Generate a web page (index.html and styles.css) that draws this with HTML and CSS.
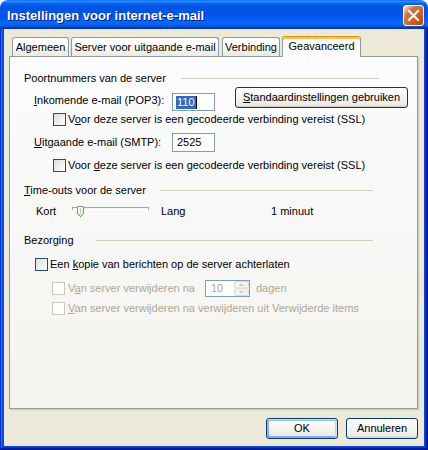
FILE: index.html
```html
<!DOCTYPE html>
<html>
<head>
<meta charset="utf-8">
<link rel="stylesheet" href="styles.css">
</head>
<body>
<div class="window">
  <div class="titlebar">
    <span class="title">Instellingen voor internet-e-mail</span>
    <div class="close">
      <svg width="19" height="19" viewBox="0 0 19 19"><path d="M5 5 L14 14 M14 5 L5 14" stroke="#fff" stroke-width="2.2" stroke-linecap="square"/></svg>
    </div>
  </div>
  <div class="frame">
    <div class="client">
      <div class="tabs">
        <div class="tab t1">Algemeen</div>
        <div class="tab t2">Server voor uitgaande e-mail</div>
        <div class="tab t3">Verbinding</div>
        <div class="tab active t4">Geavanceerd</div>
      </div>
      <div class="panel">
        <div class="group g1"><span class="glabel w1">Poortnummers van de server</span><span class="rule"></span></div>

        <div class="row r-in">
          <span class="flabel top7"><u>I</u>nkomende e-mail (POP3):</span>
          <div class="input in-sel"><span class="sel">110</span><span class="caret"></span></div>
          <div class="btn btn-std"><span><u>S</u>tandaardinstellingen gebruiken</span></div>
        </div>
        <div class="row cbrow m4"><span class="cb"></span><span>V<u>o</u>or deze server is een gecodeerde verbinding vereist (SSL)</span></div>

        <div class="row r-out">
          <span class="flabel"><u>U</u>itgaande e-mail (SMTP):</span>
          <div class="input in-out">2525</div>
        </div>
        <div class="row cbrow m7"><span class="cb"></span><span>Voor <u>d</u>eze server is een gecodeerde verbinding vereist (SSL)</span></div>

        <div class="group g2"><span class="glabel w2"><u>T</u>ime-outs voor de server</span><span class="rule"></span></div>
        <div class="row slider-row">
          <span class="kort">Kort</span>
          <svg class="slider" width="77" height="16" viewBox="0 0 77 16">
            <rect x="0.5" y="4.5" width="76" height="2" fill="#f4f3ee" stroke="#a9a797"/>
            <line x1="1" y1="6.5" x2="76" y2="6.5" stroke="#ffffff"/>
            <path d="M6 3.5 H11 Q11.5 3.5 11.5 4 V10.5 L8.5 13.5 L5.5 10.5 V4 Q5.5 3.5 6 3.5 Z" fill="#f7f7f4" stroke="#8d8c86"/>
            <path d="M5.5 10.5 L8.5 13.5 L11.5 10.5" fill="none" stroke="#2ea52e"/>
            <line x1="8.5" y1="5" x2="8.5" y2="11" stroke="#c9c8c0"/>
          </svg>
          <span class="lang">Lang</span>
          <span>1 minuut</span>
        </div>

        <div class="group g3"><span class="glabel w3">Bezorging</span><span class="rule"></span></div>
        <div class="row cbrow kopie"><span class="cb"></span><span>Een <u>k</u>opie van berichten op de server achterlaten</span></div>
        <div class="row van-row dis">
          <span class="cb cb-dis"></span>
          <span class="van-label">V<u>a</u>n server verwijderen na</span>
          <div class="spin">
            <span class="spin-val">10</span>
            <svg width="15" height="15" viewBox="0 0 15 15">
              <rect x="0.5" y="0.5" width="14" height="6.5" rx="1.5" fill="#f4f3ee" stroke="#dedbd0"/>
              <rect x="0.5" y="8" width="14" height="6.5" rx="1.5" fill="#f4f3ee" stroke="#dedbd0"/>
              <path d="M5 5 L10 5 L7.5 2.5 Z" fill="#c9c7ba"/>
              <path d="M5 10 L10 10 L7.5 12.5 Z" fill="#c9c7ba"/>
            </svg>
          </div>
          <span class="dagen">dagen</span>
        </div>
        <div class="row cbrow dis van2"><span class="cb cb-dis"></span><span><u>V</u>an server verwijderen na verwijderen uit Verwijderde items</span></div>
      </div>
      <div class="actions">
        <div class="btn btn-act btn-ok">OK</div>
        <div class="btn btn-act">Annuleren</div>
      </div>
    </div>
  </div>
</div>
</body>
</html>
```

FILE: styles.css
```css
html, body {
  margin: 0;
  padding: 0;
  background: #ffffff;
}
body {
  font-family: "Liberation Sans", Arial, sans-serif;
  font-size: 11px;
  line-height: 13px;
  color: #000;
}
u { text-decoration: underline; text-underline-offset: 1px; }

.window {
  width: 428px;
  height: 450px;
  display: flex;
  flex-direction: column;
}

.titlebar {
  height: 29px;
  flex: none;
  box-sizing: border-box;
  display: flex;
  align-items: center;
  padding: 2px 4px 0 7px;
  border-radius: 8px 8px 0 0;
  background: linear-gradient(to bottom, #0058ee 0%, #3593ff 4%, #288eff 6%, #127dff 8%, #036ffc 10%, #0262ee 14%, #0057e5 20%, #0054e3 24%, #0055eb 56%, #005bf5 66%, #026afe 76%, #0062ef 86%, #0052d6 92%, #0040ab 94%, #003092 100%);
}
.title {
  flex: 1;
  color: #fff;
  font-weight: bold;
  font-size: 13px;
  text-shadow: 1px 1px #0a1883;
}
.close {
  width: 21px;
  height: 21px;
  box-sizing: border-box;
  border: 1px solid #fff;
  border-radius: 3px;
  background: radial-gradient(circle at 90% 90%, #cc4600 0%, #dc6527 55%, #cd7546 70%, #ffccb2 90%, #fff 100%);
  display: flex;
  align-items: center;
  justify-content: center;
}

.frame {
  flex: 1;
  display: flex;
  padding: 0 4px 4px;
  background: #0a48db;
  box-shadow: inset -1px -1px #00138c, inset 1px 0 #0831d9, inset -2px -2px #001ea0, inset 2px 0 #166aee, inset -3px -3px #003bda, inset 3px 0 #0855dd;
}
.client {
  flex: 1;
  background: #ece9d8;
  display: flex;
  flex-direction: column;
}

/* tabs */
.tabs {
  display: flex;
  align-items: flex-end;
  height: 20px;
  margin: 7px 0 0 8px;
  position: relative;
  z-index: 1;
}
.tab {
  height: 19px;
  box-sizing: border-box;
  border: 1px solid #919b9c;
  border-bottom: none;
  border-radius: 3px 3px 0 0;
  background: linear-gradient(#fff, #fff 26%, #fafaf9 48%, #f1f1ed 73%, #ebeae4);
  display: flex;
  align-items: center;
  justify-content: center;
  margin-right: 2px;
  white-space: nowrap;
}
.t1 { width: 57px; }
.t2 { width: 148px; margin-right: 3px; }
.t3 { width: 58px; }
.tab.active {
  width: 79px;
  height: 21px;
  margin-bottom: -1px;
  background: #fcfcfe;
  border-top: 1px solid #e68b2c;
  box-shadow: inset 0 2px #ffc83c;
  padding-bottom: 2px;
}

/* panel */
.panel {
  margin: 0 6px 0 5px;
  height: 353px;
  flex: none;
  box-sizing: border-box;
  border: 1px solid #919b9c;
  background: linear-gradient(#fcfcfe, #f4f3ee);
  box-shadow: 1px 1px 0 #d0cebf, 2px 2px 0 #e3e0d0;
  display: flex;
  flex-direction: column;
}
.row {
  display: flex;
  align-items: center;
  flex: none;
  white-space: nowrap;
}
.group {
  height: 13px;
  display: flex;
  align-items: center;
  padding-left: 14px;
  flex: none;
  white-space: nowrap;
}
.glabel { flex: none; }
.rule { flex: 1; height: 1px; background: #d0d0bf; }
.g1 { margin: 15px 38px 0 0; }
.w1 { width: 157px; }
.g2 { margin: 12px 44px 0 0; }
.w2 { width: 136px; }
.g3 { margin: 15px 44px 0 0; }
.w3 { width: 72px; }

.flabel { width: 138px; flex: none; }
.top7 { margin-top: 7px; }

.r-in {
  margin-top: 2px;
  height: 22px;
  align-items: flex-start;
  padding-left: 24px;
}
.input {
  width: 43px;
  box-sizing: border-box;
  border: 1px solid #7f9db9;
  background: #fff;
  display: flex;
  align-items: center;
  padding-left: 4px;
  flex: none;
}
.in-sel { height: 18px; margin-top: 6px; padding-left: 3px; }
.sel { background: #316ac5; color: #fff; padding: 0 1px; }
.caret { width: 1px; height: 13px; background: #000; }
.in-out { height: 19px; }

.btn {
  box-sizing: border-box;
  border: 1px solid #003c74;
  border-radius: 3px;
  background: linear-gradient(180deg, #fff, #ecebe6 86%, #d6d0c5);
  display: flex;
  align-items: center;
  justify-content: center;
  flex: none;
}
.btn-std {
  width: 173px;
  height: 21px;
  margin-left: 20px;
}

.cbrow { height: 13px; padding-left: 43px; gap: 2px; }
.m4 { margin-top: 4px; }
.m7 { margin-top: 7px; }
.cb {
  width: 13px;
  height: 13px;
  box-sizing: border-box;
  border: 1px solid #1c5180;
  background: linear-gradient(135deg, #dcdcd7, #fff);
  flex: none;
}
.cb-dis { border-color: #cac8bb; background: #fff; }
.dis { color: #aca899; }

.r-out { margin-top: 7px; height: 19px; padding-left: 24px; }

.slider-row { margin-top: 6px; height: 16px; padding-left: 26px; }
.kort { width: 36px; flex: none; }
.slider { flex: none; display: block; }
.lang { width: 110px; margin-left: 12px; flex: none; }

.kopie { margin-top: 11px; padding-left: 25px; }
.van-row { margin-top: 9px; height: 17px; padding-left: 42px; gap: 3px; }
.van-label { width: 134px; flex: none; }
.spin {
  width: 45px;
  height: 17px;
  box-sizing: border-box;
  border: 1px solid #7f9db9;
  background: #fff;
  display: flex;
  align-items: center;
  justify-content: space-between;
  padding: 0 0 0 5px;
  flex: none;
}
.spin svg { display: block; margin-right: 0; }
.dagen { margin-left: 3px; }
.van2 { margin-top: 5px; padding-left: 42px; gap: 3px; }

.actions {
  display: flex;
  justify-content: flex-end;
  gap: 8px;
  margin: 9px 6px 0 0;
}
.btn-act { width: 72px; height: 21px; }
.btn-ok {
  box-shadow: inset -1px 1px #cee7ff, inset 1px 2px #98b8ea, inset -2px 2px #bcd4f6, inset 1px -1px #89ade4, inset 2px -2px #89ade4;
}
```
